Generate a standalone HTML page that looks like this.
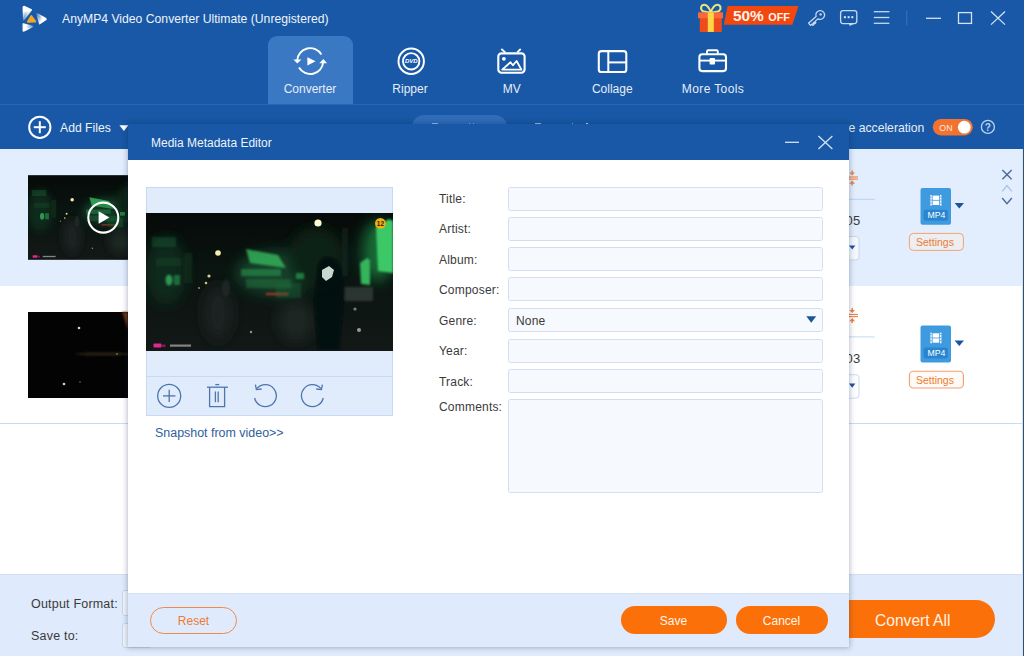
<!DOCTYPE html>
<html><head><meta charset="utf-8">
<style>
*{margin:0;padding:0;box-sizing:border-box}
html,body{width:1024px;height:656px;overflow:hidden;background:#fff;font-family:"Liberation Sans",sans-serif}
.a{position:absolute;white-space:nowrap}
svg{position:absolute;overflow:visible}
#hdr{left:0;top:0;width:1024px;height:149px;background:#1858a6}
#navsep{left:0;top:104px;width:1024px;height:1px;background:#2b67b3}
#tabc{left:268px;top:36px;width:85px;height:68px;background:#3a78c4;border-radius:9px 9px 0 0}
.navlbl{color:#e6eef9;font-size:12px;text-align:center;width:120px;line-height:14px}
.white{color:#fff}
#row1{left:0;top:149px;width:1022px;height:137px;background:#e2eefd}
#row2{left:0;top:286px;width:1022px;height:137px;background:#fff}
#line2{left:0;top:423px;width:1022px;height:1px;background:#c6dcf4}
#bot{left:0;top:574px;width:1022px;height:82px;background:#dfebfc;border-top:1px solid #d2dff1}
#redge1{left:1022px;top:149px;width:1px;height:507px;background:#d4e3f6}
#redge{left:1023px;top:149px;width:1px;height:507px;background:#33506f}
#dlg{left:128px;top:124px;width:721px;height:523px;background:#fff;box-shadow:0 0 5px 1px rgba(10,30,70,.28)}
#dlgt{left:0;top:0;width:721px;height:36px;background:#1858a6}
#dlgf{left:0;top:469px;width:721px;height:54px;background:#dfebfc;border-top:1px solid #d3e1f3}
.lbl{color:#3a3a3a;font-size:12px;line-height:14px;letter-spacing:0.2px}
.inp{background:#f6f9fe;border:1px solid #d5def0;border-radius:2.5px}
.obtn{background:#fc7009;color:#fff6ec;border-radius:14px;text-align:center;font-size:12px}
</style></head><body>
<svg width="0" height="0" style="position:absolute;left:0;top:0"><symbol id="vid" viewBox="0 0 247 138" width="247" height="138">
    <defs><filter id="b2" x="-100%" y="-100%" width="300%" height="300%"><feGaussianBlur stdDeviation="7"/></filter>
    <filter id="b3" x="-50%" y="-50%" width="200%" height="200%"><feGaussianBlur stdDeviation="1.3"/></filter>
    <filter id="b4" x="-50%" y="-50%" width="200%" height="200%"><feGaussianBlur stdDeviation="0.6"/></filter>
    <linearGradient id="vg" x1="0" y1="0" x2="0" y2="1"><stop offset="0" stop-color="#060a08"/><stop offset="0.4" stop-color="#0a1410"/><stop offset="1" stop-color="#121816"/></linearGradient></defs>
    <rect width="247" height="138" fill="url(#vg)"/>
    <g filter="url(#b2)">
      <ellipse cx="20" cy="58" rx="20" ry="34" fill="#0e2a1a"/>
      <ellipse cx="130" cy="60" rx="40" ry="22" fill="#12402a"/>
      <ellipse cx="170" cy="45" rx="28" ry="30" fill="#0c2019"/>
      <ellipse cx="232" cy="38" rx="16" ry="30" fill="#176a36"/>
      <ellipse cx="72" cy="100" rx="14" ry="28" fill="#1e2422"/>
      <ellipse cx="150" cy="108" rx="18" ry="20" fill="#1c2624"/>
    </g>
    <g filter="url(#b3)">
      <rect x="6" y="24" width="24" height="10" fill="#1a5a32" opacity="0.45"/>
      <rect x="10" y="45" width="25" height="8" fill="#164a2a" opacity="0.4"/>
      <ellipse cx="23" cy="67" rx="3.5" ry="5.5" fill="#35b45c" opacity="0.8"/>
      <rect x="38" y="40" width="8" height="30" fill="#0e2a1a" opacity="0.8"/>
      <path d="M100 36 L132 42 L140 55 L104 50 Z" fill="#34b85c" opacity="0.8"/>
      <rect x="28" y="62" width="6" height="10" fill="#2a9a50" opacity="0.6"/>
      <rect x="150" y="60" width="8" height="6" fill="#2fb058" opacity="0.6"/>
      <rect x="95" y="56" width="40" height="7" fill="#2a9a50" opacity="0.55"/>
      <rect x="100" y="66" width="45" height="9" fill="#1f7a40" opacity="0.45"/>
      <rect x="120" y="80" width="22" height="2" fill="#c03a28" opacity="0.9"/>
      <rect x="130" y="70" width="25" height="15" fill="#1c6a3a" opacity="0.35"/>
      <path d="M230 14 L243 6 L247 8 L247 60 L232 58 Z" fill="#3ec868"/>
      <path d="M214 50 L221 45 L224 47 L224 72 L215 71 Z" fill="#35b45c"/>
      <rect x="196" y="15" width="6" height="48" fill="#1a2a24" opacity="0.5"/>
      <path d="M172 52 Q176 42 184 44 Q192 46 196 56 L198 85 L193 137 L172 137 L168 90 Z" fill="#060908" opacity="0.85"/>
      <rect x="199" y="74" width="28" height="14" fill="#5a6462" opacity="0.4"/>
      
      <ellipse cx="80" cy="75" rx="4" ry="9" fill="#2a3430" opacity="0.5"/>
    </g>
    <g filter="url(#b4)">
      <circle cx="172" cy="10" r="3.6" fill="#fff8d0"/>
      <circle cx="72" cy="40" r="2.8" fill="#f8ecb0"/>
      <circle cx="63" cy="63" r="1.6" fill="#e0d090"/>
      <circle cx="60" cy="70" r="1.3" fill="#d0c080"/>
      <circle cx="53" cy="75" r="1" fill="#a09050"/>
      <path d="M176 57 L183 53 L188 57 L186 64 L180 68 L176 64 Z" fill="#c8d8d0"/>
      <circle cx="213" cy="117" r="2" fill="#c8d8d0" opacity="0.7"/>
      <circle cx="209" cy="96" r="1.6" fill="#b8c8c0" opacity="0.6"/>
      <circle cx="105" cy="119" r="1.2" fill="#c0b080" opacity="0.8"/>
    </g>
    <circle cx="234.4" cy="10.4" r="5.4" fill="#f0b010"/>
    <text x="234.4" y="12.8" text-anchor="middle" font-family="Liberation Sans" font-weight="bold" font-size="6.4" fill="#2a2208">12</text>
    <rect x="7.5" y="130.5" width="8" height="4" rx="1" fill="#e02890"/>
    <rect x="15.5" y="131.5" width="4" height="2.5" fill="#801858"/>
    <rect x="24" y="131.5" width="21" height="2.2" fill="#a0a0a0" opacity="0.8"/>
  </symbol></svg>
<div id="hdr" class="a"></div>
<div id="tabc" class="a"></div>
<div id="navsep" class="a"></div>

<!-- logo -->
<svg style="left:0;top:0" width="60" height="40" viewBox="0 0 60 40">
<defs>
<linearGradient id="lg1" x1="0" y1="0" x2="0" y2="1"><stop offset="0.3" stop-color="#fff"/><stop offset="1" stop-color="#fff" stop-opacity="0.15"/></linearGradient>
<linearGradient id="lg2" x1="1" y1="0.6" x2="0" y2="0.2"><stop offset="0.35" stop-color="#fff"/><stop offset="1" stop-color="#fff" stop-opacity="0.1"/></linearGradient>
<linearGradient id="lg3" x1="0" y1="0.5" x2="1" y2="0.3"><stop offset="0.3" stop-color="#fff"/><stop offset="1" stop-color="#fff" stop-opacity="0.1"/></linearGradient>
</defs>
<path d="M23.2 7.4 Q23.4 6.2 24.6 6.6 L31.4 9.8 L23.6 20.4 Z" fill="url(#lg1)" stroke="url(#lg1)" stroke-width="1.3" stroke-linejoin="round"/>
<path d="M45.8 18.6 Q46.4 19.3 45.7 19.8 L39.6 23.8 L36.4 13 Z" fill="url(#lg2)" stroke="url(#lg2)" stroke-width="1.3" stroke-linejoin="round"/>
<path d="M24 31 Q23.2 31.4 23.2 30.4 L23.2 23.8 L33.4 26.4 Z" fill="url(#lg3)" stroke="url(#lg3)" stroke-width="1.3" stroke-linejoin="round"/>
<path d="M31.3 16 L35.4 21.6 L27.8 21.8 Z" fill="#f4a622" stroke="#f4a622" stroke-width="1.8" stroke-linejoin="round"/>
</svg>
<div class="a white" style="left:62px;top:12px;font-size:12.2px;line-height:14px;color:#eef3fa">AnyMP4 Video Converter Ultimate (Unregistered)</div>

<!-- gift + banner -->
<svg style="left:690px;top:0" width="120" height="36" viewBox="690 0 120 36">
<path d="M710.8 12.2 C709 7.5 706.5 4.6 704 4.8 C701 5 700.2 8.4 702 10.4 C703.6 12 707 12.2 710.8 12.2 C714.6 12.2 718 12 719.6 10.4 C721.4 8.4 720.6 5 717.6 4.8 C715.1 4.6 712.6 7.5 710.8 12.2 Z" fill="none" stroke="#e9e47e" stroke-width="2.1"/>
<rect x="699.8" y="18" width="22" height="14" fill="#ee4a1c"/>
<rect x="698" y="12.3" width="25" height="6" fill="#f7683a"/>
<rect x="707.8" y="12.3" width="6" height="19.6" fill="#fbd746"/>
<path d="M727.6 5.9 L797.4 5.9 Q798.6 5.9 798.2 7 L792.4 24.7 L724.6 24.7 Q723.8 24.7 724 23.8 Z" fill="#f2470f"/>
<text x="733" y="20.8" font-family="Liberation Sans" font-weight="bold" font-size="15.4" fill="#fff4ea">50%</text>
<text x="768.3" y="20.8" font-family="Liberation Sans" font-weight="bold" font-size="10.8" fill="#fff4ea">OFF</text>
</svg>

<!-- key, chat, menu, sep, min, max, close -->
<svg style="left:800px;top:0" width="224" height="36" viewBox="800 0 224 36">
<g fill="none" stroke="#c5daf3" stroke-width="1.3" stroke-linejoin="round">
<path d="M816.09 16.57 L808.47 23.15 L810.43 25.42 L811.95 24.11 L812.93 25.25 L813.99 24.33 L813.01 23.20 L813.76 22.54 L814.74 23.68 L815.80 22.76 L814.82 21.63 L818.05 18.84 A4.4 4.4 0 1 0 816.09 16.57 Z"/>
<rect x="840.6" y="10.6" width="16.2" height="13" rx="2.5"/>
</g>
<circle cx="820.6" cy="14.4" r="1.2" fill="#c5daf3"/>
<path d="M849 23.4 L854.8 23.4 L849.6 26 Z" fill="#c5daf3"/>
<rect x="843.9" y="16.2" width="2" height="2" fill="#dce9f8"/>
<rect x="847.6" y="16.2" width="2" height="2" fill="#dce9f8"/>
<rect x="851.3" y="16.2" width="2" height="2" fill="#dce9f8"/>
<g stroke="#c5daf3" stroke-width="1.3">
<line x1="873.8" y1="11.7" x2="889.4" y2="11.7"/>
<line x1="873.8" y1="17.5" x2="889.4" y2="17.5"/>
<line x1="873.8" y1="23.3" x2="889.4" y2="23.3"/>
</g>
<line x1="906.8" y1="10.8" x2="906.8" y2="25" stroke="#3e74b8" stroke-width="1"/>
<g stroke="#d3e2f5" stroke-width="1.3" fill="none">
<line x1="926" y1="18.3" x2="941" y2="18.3"/>
<rect x="958.5" y="12.6" width="13" height="10.8"/>
<line x1="991" y1="11.5" x2="1005" y2="24.6"/>
<line x1="1005" y1="11.5" x2="991" y2="24.6"/>
</g>
</svg>

<!-- nav icons -->
<svg style="left:280px;top:40px" width="460" height="40" viewBox="280 40 460 40">
<g fill="none" stroke="#fff" stroke-width="1.9">
<path d="M297.2 60.5 A13 13 0 0 1 321.4 54.6"/>
<path d="M299 67.6 A13 13 0 0 0 323.2 62"/>
<circle cx="411.2" cy="61.3" r="12.7" stroke-width="2"/>
<circle cx="411.2" cy="61.3" r="8.2" stroke-width="1.9"/>
<rect x="498.3" y="53.4" width="26.3" height="19.4" rx="3.2" stroke-width="2.1"/>
<line x1="501.3" y1="49" x2="505.3" y2="52.4" stroke-width="1.8"/>
<line x1="520.7" y1="49" x2="517.2" y2="52.4" stroke-width="1.8"/>
<path d="M502.2 69.6 L510.5 62.3 L512.8 65.3 L516.6 61 L521.4 69.6 Z" stroke-width="1.8" stroke-linejoin="round"/>
<rect x="598.8" y="51.1" width="27.5" height="20.9" rx="2.6" stroke-width="2.1"/>
<line x1="608.3" y1="51" x2="608.3" y2="72" stroke-width="2"/>
<line x1="608.3" y1="62.4" x2="626" y2="62.4" stroke-width="2"/>
<rect x="699.4" y="54.3" width="26.6" height="16.8" rx="2.8" stroke-width="2.1"/>
<path d="M707 54 L707 51.5 Q707 50.2 708.3 50.2 L716.6 50.2 Q717.8 50.2 717.8 51.5 L717.8 54" stroke-width="1.9"/>
<line x1="699.5" y1="60.6" x2="726" y2="60.6" stroke-width="1.9"/>
</g>
<g fill="#fff">
<path d="M293.4 59.4 L301.4 59.4 L297.3 63.6 Z"/>
<path d="M319.3 63.2 L327.1 63.2 L323.3 59 Z"/>
<path d="M307.4 57.2 L315.6 61.3 L307.4 65.5 Z"/>
<circle cx="503.9" cy="58.8" r="1.9"/>
<rect x="709.6" y="58.1" width="5.4" height="6.5" rx="0.8"/>
</g>
<text x="411.3" y="63.4" text-anchor="middle" font-family="Liberation Sans" font-weight="bold" font-style="italic" font-size="6" fill="#fff">DVD</text>
</svg>
<div class="a navlbl" style="left:250px;top:82px">Converter</div>
<div class="a navlbl" style="left:350px;top:82px">Ripper</div>
<div class="a navlbl" style="left:451.8px;top:82px">MV</div>
<div class="a navlbl" style="left:552.3px;top:82px">Collage</div>
<div class="a navlbl" style="left:653px;top:82px;letter-spacing:0.38px">More Tools</div>

<!-- toolbar -->
<svg style="left:20px;top:110px" width="120" height="35" viewBox="20 110 120 35">
<circle cx="39.8" cy="127.3" r="10.6" fill="none" stroke="#fff" stroke-width="2"/>
<line x1="33.8" y1="127.2" x2="45.8" y2="127.2" stroke="#fff" stroke-width="2"/>
<line x1="39.8" y1="121.2" x2="39.8" y2="133.2" stroke="#fff" stroke-width="2"/>
<path d="M119.4 125.2 L128.4 125.2 L123.9 131 Z" fill="#fff"/>
</svg>
<div class="a white" style="left:60px;top:121px;font-size:12.2px;line-height:14px;color:#eef3fa">Add Files</div>
<div class="a" style="left:412px;top:114.6px;width:94.5px;height:30px;background:#2f6dba;border-radius:12px"></div>
<div class="a white" style="left:848.5px;top:121px;font-size:12.2px;line-height:14px;color:#e6eef9">e acceleration</div>
<svg style="left:925px;top:112px" width="80" height="30" viewBox="925 112 80 30">
<rect x="932.8" y="118.9" width="40" height="16.5" rx="8.25" fill="#f2722f"/>
<circle cx="964.3" cy="127.2" r="6.4" fill="#fff"/>
<text x="939.3" y="130.8" font-family="Liberation Sans" font-size="8.8" fill="#fde8dc">ON</text>
<circle cx="987.9" cy="126.9" r="6.5" fill="none" stroke="#b9d3f2" stroke-width="1.3"/>
<text x="987.9" y="130.8" text-anchor="middle" font-family="Liberation Sans" font-weight="bold" font-size="10" fill="#b9d3f2">?</text>
</svg>

<!-- content list -->
<div id="row1" class="a"></div>
<div id="row2" class="a"></div>
<div id="line2" class="a"></div>
<div id="bot" class="a"></div>
<div id="redge1" class="a"></div>
<div id="redge" class="a"></div>

<!-- thumbnails -->
<svg style="left:28px;top:175px;overflow:hidden" width="100" height="85" viewBox="0 0 100 85">
<defs><filter id="b0" x="-50%" y="-50%" width="200%" height="200%"><feGaussianBlur stdDeviation="0.8"/></filter></defs>
<use href="#vid" x="0" y="0" width="151.5" height="85"/>
<circle cx="75.3" cy="42.6" r="15" fill="rgba(0,0,0,0.15)" stroke="#fff" stroke-width="2.1"/>
<path d="M70.6 36.2 L81.4 42.5 L70.6 48.8 Z" fill="#fff"/>
</svg>
<svg style="left:28px;top:312px" width="100" height="86" viewBox="0 0 100 86">
<rect width="100" height="86" fill="#040303"/>
<ellipse cx="75" cy="42" rx="28" ry="1.5" fill="#2a2418" filter="url(#b0)"/>
<circle cx="51" cy="16" r="1.3" fill="#d8d0c0"/>
<circle cx="36" cy="72" r="1.3" fill="#d8d0c0"/>
<circle cx="52" cy="70" r="0.8" fill="#807060"/>
<circle cx="89" cy="42" r="0.9" fill="#807060"/>
<path d="M94 0 L100 0 L100 18 Q97 8 94 0 Z" fill="#6a3418" filter="url(#b0)"/>
</svg>

<!-- right side of rows -->
<svg style="left:845px;top:160px" width="179" height="250" viewBox="845 160 179 250">
<defs><g id="cmp">
<line x1="849" y1="0" x2="858" y2="0" stroke="#f08040" stroke-width="1.1"/>
<line x1="849" y1="2.1" x2="858" y2="2.1" stroke="#f08040" stroke-width="1.1"/>
<path d="M849.4 -4.6 L855 -4.6 L852.2 -1.4 Z M851.5 -6.4 L852.9 -6.4 L852.9 -4.4 L851.5 -4.4 Z" fill="#f08040"/>
<path d="M849.4 6.7 L855 6.7 L852.2 3.5 Z M851.5 8.5 L852.9 8.5 L852.9 6.5 L851.5 6.5 Z" fill="#f08040"/>
</g></defs>
<use href="#cmp" y="177"/>
<use href="#cmp" y="314.5"/>
<line x1="845" y1="199.3" x2="874.8" y2="199.3" stroke="#b8d3f0" stroke-width="1"/>
<line x1="845" y1="336.9" x2="874.8" y2="336.9" stroke="#c2daf3" stroke-width="1"/>
<rect x="820" y="236.5" width="39" height="23.5" rx="3" fill="#f4f8fe" stroke="#c6d6ec" stroke-width="1"/>
<rect x="820" y="374.7" width="39" height="23.5" rx="3" fill="#fbfdff" stroke="#cfdcef" stroke-width="1"/>
<path d="M849 245.4 L855.4 245.4 L852.2 249.6 Z" fill="#1b55a0"/>
<path d="M849 383.6 L855.4 383.6 L852.2 387.8 Z" fill="#1b55a0"/>
<!-- MP4 icons -->
<rect x="920.5" y="187.9" width="30.5" height="36.9" rx="2" fill="#3f9be0"/>
<rect x="920.5" y="325.6" width="30.5" height="36.9" rx="2" fill="#3f9be0"/>
<rect x="923.6" y="209.7" width="24.3" height="11" rx="2" fill="#2a85d0"/>
<rect x="923.6" y="347.4" width="24.3" height="11" rx="2" fill="#2a85d0"/>
<g fill="#fff">
<rect x="930.4" y="195" width="1.4" height="10.6"/><rect x="940" y="195" width="1.4" height="10.6"/><rect x="930.4" y="196.6" width="1.4" height="0.8" fill="#3f9be0"/><rect x="930.4" y="199.6" width="1.4" height="0.8" fill="#3f9be0"/><rect x="930.4" y="202.6" width="1.4" height="0.8" fill="#3f9be0"/><rect x="940" y="196.6" width="1.4" height="0.8" fill="#3f9be0"/><rect x="940" y="199.6" width="1.4" height="0.8" fill="#3f9be0"/><rect x="940" y="202.6" width="1.4" height="0.8" fill="#3f9be0"/>
<rect x="932.6" y="195.6" width="6.6" height="4.3"/><rect x="932.6" y="200.7" width="6.6" height="4.3"/>
<rect x="930.4" y="332.7" width="1.4" height="10.6"/><rect x="940" y="332.7" width="1.4" height="10.6"/><rect x="930.4" y="334.3" width="1.4" height="0.8" fill="#3f9be0"/><rect x="930.4" y="337.3" width="1.4" height="0.8" fill="#3f9be0"/><rect x="930.4" y="340.3" width="1.4" height="0.8" fill="#3f9be0"/><rect x="940" y="334.3" width="1.4" height="0.8" fill="#3f9be0"/><rect x="940" y="337.3" width="1.4" height="0.8" fill="#3f9be0"/><rect x="940" y="340.3" width="1.4" height="0.8" fill="#3f9be0"/>
<rect x="932.6" y="333.3" width="6.6" height="4.3"/><rect x="932.6" y="338.4" width="6.6" height="4.3"/>
</g>
<text x="936.4" y="218.2" text-anchor="middle" font-family="Liberation Sans" font-size="8.7" fill="#fff">MP4</text>
<text x="936.4" y="355.9" text-anchor="middle" font-family="Liberation Sans" font-size="8.7" fill="#fff">MP4</text>
<path d="M954.6 202.9 L964 202.9 L959.3 208.4 Z" fill="#1b55a0"/>
<path d="M954.6 340.6 L964 340.6 L959.3 346.1 Z" fill="#1b55a0"/>
<rect x="909.4" y="233.4" width="54" height="17" rx="4" fill="#eceef2" stroke="#f0a474" stroke-width="1"/>
<rect x="909.4" y="371.2" width="54" height="16.8" rx="4" fill="#fefaf7" stroke="#f0a070" stroke-width="1.1"/>
<g stroke="#4a6a98" stroke-width="1.4" fill="none">
<line x1="1002.4" y1="170" x2="1011.6" y2="179.3"/><line x1="1011.6" y1="170" x2="1002.4" y2="179.3"/>
<path d="M1002.2 198 L1007 203.6 L1011.8 198"/>
</g>
<path d="M1002.2 191.3 L1007 185.7 L1011.8 191.3" stroke="#a9bdd9" stroke-width="1.2" fill="none"/>
</svg>
<div class="a" style="left:916px;top:236px;font-size:10.5px;line-height:12px;color:#ef7a2e">Settings</div>
<div class="a" style="left:916px;top:373.8px;font-size:10.5px;line-height:12px;color:#ef7a2e">Settings</div>
<div class="a lbl" style="left:845.5px;top:213.5px;font-size:13px">05</div>
<div class="a lbl" style="left:845.5px;top:351.5px;font-size:13px">03</div>

<!-- bottom -->
<div class="a lbl" style="left:31px;top:597px;font-size:12.5px">Output Format:</div>
<div class="a lbl" style="left:31px;top:629px;font-size:12.5px">Save to:</div>
<div class="a" style="left:122px;top:590px;width:30px;height:26px;border:1px solid #c6d6ec;border-radius:3px;background:#f0f5fd"></div>
<div class="a" style="left:122px;top:622.5px;width:30px;height:25px;border:1px solid #c6d6ec;border-radius:3px;background:#f0f5fd"></div>
<div class="a obtn" style="left:830px;top:599.8px;width:165px;height:38px;border-radius:19px;font-size:15.6px;line-height:38px;padding-left:0">&nbsp;</div>
<div class="a" style="left:875px;top:612px;font-size:15.6px;line-height:18px;color:#fff3e4">Convert All</div>

<!-- dialog -->
<div id="dlg" class="a">
  <div id="dlgt" class="a"></div>
  <div class="a white" style="left:23px;top:12px;font-size:12px;line-height:14px;color:#eef3fa">Media Metadata Editor</div>
  <svg style="left:650px;top:8px" width="60" height="24" viewBox="778 132 60 24">
    <g stroke="#d3e2f5" stroke-width="1.3"><line x1="785" y1="142.3" x2="799" y2="142.3"/>
    <line x1="818.4" y1="136" x2="832.4" y2="149"/><line x1="832.4" y1="136" x2="818.4" y2="149"/></g>
  </svg>
  <div id="dlgf" class="a"></div>
  <!-- cover panel -->
  <div class="a" style="left:18px;top:63px;width:247px;height:229px;background:#e0ecfc;border:1px solid #c8daf1"></div>
  <div class="a" style="left:19px;top:252px;width:245px;height:1px;background:#c8daf1"></div>
  <svg style="left:18px;top:89px;overflow:hidden" width="247" height="138" viewBox="0 0 247 138"><use href="#vid"/></svg>
  <svg style="left:18px;top:252px" width="247" height="40" viewBox="146 376 247 40">
    <g fill="none" stroke="#4d75ae" stroke-width="1.3">
      <circle cx="169.2" cy="395.9" r="11.5"/>
      <line x1="163" y1="395.9" x2="175.4" y2="395.9"/><line x1="169.2" y1="389.7" x2="169.2" y2="402.1"/>
      <line x1="207" y1="387.2" x2="228" y2="387.2"/>
      <line x1="215.3" y1="384.6" x2="219.2" y2="384.6"/>
      <path d="M209.6 387.2 L209.6 406.6 L224.6 406.6 L224.6 387.2"/>
      <line x1="215.4" y1="391.5" x2="215.4" y2="402.2"/><line x1="218.2" y1="391.5" x2="218.2" y2="402.2"/>
      <path d="M257 388.5 A11 11 0 1 1 254.6 398"/>
      <path d="M320.8 388.5 A11 11 0 1 0 323.2 398"/>
    </g>
    <g fill="none" stroke="#4d75ae" stroke-width="1.3" stroke-linejoin="miter">
      <path d="M255.4 384.6 L256.4 389.6 L261.6 389"/>
      <path d="M322.4 384.6 L321.4 389.6 L316.2 389"/>
    </g>
  </svg>
  <div class="a" style="left:27px;top:302px;font-size:12.45px;line-height:14px;color:#2f5e9e">Snapshot from video&gt;&gt;</div>
  <!-- form -->
  <div class="a lbl" style="left:311px;top:67.7px">Title:</div>
  <div class="a lbl" style="left:311px;top:98.2px">Artist:</div>
  <div class="a lbl" style="left:311px;top:128.7px">Album:</div>
  <div class="a lbl" style="left:311px;top:159.2px">Composer:</div>
  <div class="a lbl" style="left:311px;top:189.7px">Genre:</div>
  <div class="a lbl" style="left:311px;top:220.2px">Year:</div>
  <div class="a lbl" style="left:311px;top:250.7px">Track:</div>
  <div class="a lbl" style="left:311px;top:276.2px">Comments:</div>
  <div class="a inp" style="left:380px;top:62.7px;width:315px;height:24px"></div>
  <div class="a inp" style="left:380px;top:92.5px;width:315px;height:24px"></div>
  <div class="a inp" style="left:380px;top:123px;width:315px;height:24px"></div>
  <div class="a inp" style="left:380px;top:153.4px;width:315px;height:24px"></div>
  <div class="a inp" style="left:380px;top:183.7px;width:315px;height:24px"></div>
  <div class="a inp" style="left:380px;top:214.5px;width:315px;height:24px"></div>
  <div class="a inp" style="left:380px;top:244.9px;width:315px;height:24px"></div>
  <div class="a inp" style="left:380px;top:275.4px;width:315px;height:94px"></div>
  <div class="a lbl" style="left:388px;top:189.7px">None</div>
  <svg style="left:670px;top:185px" width="20" height="20" viewBox="798 309 20 20"><path d="M806.3 316.3 L816.2 316.3 L811.25 322.8 Z" fill="#1b55a0"/></svg>
  <!-- footer -->
  <div class="a" style="left:22px;top:482.5px;width:87px;height:27px;border:1.5px solid #ef8a48;border-radius:14px;text-align:center;font-size:12px;line-height:27px;color:#ef7a30">Reset</div>
  <div class="a obtn" style="left:492.5px;top:482px;width:106px;height:28px;line-height:30px;font-size:12px">Save</div>
  <div class="a obtn" style="left:607.5px;top:482px;width:92px;height:28px;line-height:30px;font-size:12px">Cancel</div>
</div>
<div class="a" style="left:0;top:123px;width:1024px;height:1px;z-index:5">
<div class="a" style="left:432px;top:0;width:6px;height:1px;background:#7fa6da"></div>
<div class="a" style="left:469px;top:0;width:1px;height:1px;background:#6f98d0"></div>
<div class="a" style="left:473px;top:0;width:1px;height:1px;background:#6f98d0"></div>
<div class="a" style="left:535px;top:0;width:6px;height:1px;background:#7fa6da"></div>
<div class="a" style="left:572px;top:0;width:1px;height:1px;background:#6f98d0"></div>
<div class="a" style="left:586px;top:0;width:2px;height:1px;background:#9fc0ea"></div>
</div>
</body></html>
